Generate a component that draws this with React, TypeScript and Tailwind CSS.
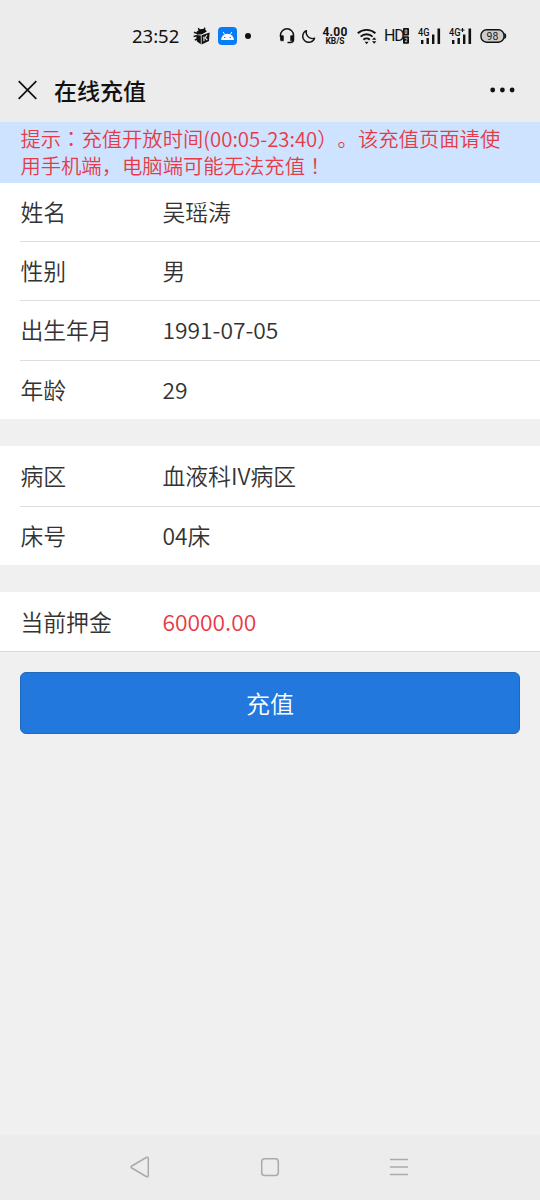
import type { ReactNode } from "react";
import clsx from "clsx";

interface Field {
  label: string;
  value: string;
  height: string;
  danger?: boolean;
}

const personFields: Field[] = [
  { label: "姓名", value: "吴瑶涛", height: "h-[59px]" },
  { label: "性别", value: "男", height: "h-[59px]" },
  { label: "出生年月", value: "1991-07-05", height: "h-[60px]" },
  { label: "年龄", value: "29", height: "h-[58px]" },
];

const wardFields: Field[] = [
  { label: "病区", value: "血液科IV病区", height: "h-[61px]" },
  { label: "床号", value: "04床", height: "h-[58px]" },
];

const depositFields: Field[] = [
  { label: "当前押金", value: "60000.00", height: "h-[59px]", danger: true },
];

function SignalIcon({ label }: { label: string }) {
  return (
    <svg width="24" height="18" viewBox="0 0 24 18" fill="#111">
      <text x="0" y="8.5" fontSize="10" fontWeight="500" fontFamily="Roboto, sans-serif" textLength="11.5" lengthAdjust="spacingAndGlyphs">
        4G
      </text>
      {label === "4G+" && <path d="M11.5 3h4M13.5 1v4" stroke="#111" strokeWidth="1.1" />}
      <rect x="3" y="13" width="2.4" height="4" />
      <rect x="8.5" y="11" width="2.4" height="6" />
      <rect x="14" y="7.5" width="2.4" height="9.5" />
      <rect x="19.5" y="1.5" width="2.6" height="15.5" />
    </svg>
  );
}

function StatusBar() {
  return (
    <div className="flex h-[60px] items-center pt-3 pl-[132px] font-normal text-[#111]">
      <span className="w-[61px] font-['Noto_Sans','Roboto',sans-serif] text-[18.5px] leading-6">23:52</span>
      {/* bug */}
      <svg width="18" height="20" viewBox="0 0 18 20" fill="#111">
        <path d="M5.2 2.2 7 4.6M11.8 1.6 11 4.4M1 6.2l3 1.2M.6 10.4l3-.6M1.8 14l2.6-1" stroke="#111" strokeWidth="1.5" />
        <path d="m3.4 6 3.2-2.8 5.2-.4 2 2.6L9 8.2 4 8.8Z" />
        <path d="m3 9 4.8.6v8.6L4 15.6ZM8.6 9.2l8-2.6-.6 8.4-7.4 3.4Z" />
        <path d="m10.8 10.4.2 4.8M14 9l-1.9 3 2.2 2" stroke="#ececec" strokeWidth="1.1" fill="none" />
      </svg>
      {/* android head */}
      <svg className="ml-[7px]" width="19" height="18" viewBox="0 0 19 18">
        <rect width="19" height="18" rx="4" fill="#087cf5" />
        <path d="M3.2 13a6.3 6.3 0 0 1 12.6 0Z" fill="#fff" />
        <path d="m5.2 5 1.5 2.5M13.8 5l-1.5 2.5" stroke="#fff" strokeWidth="1" />
        <circle cx="6.8" cy="10.5" r=".7" fill="#087cf5" />
        <circle cx="12.2" cy="10.5" r=".7" fill="#087cf5" />
      </svg>
      <span className="ml-[8px] size-[6px] rounded-full bg-[#111]" />
      {/* headset */}
      <svg className="ml-[28px]" width="16" height="16" viewBox="0 0 16 16" fill="none" stroke="#111" strokeWidth="1.5">
        <path d="M1.5 9V7.3a6.4 6.4 0 0 1 13 0v4.2c0 2-1 3-3 3H8.5" />
        <path d="M1.5 7.8h2.8v5H2.5c-.7 0-1-.4-1-1ZM14.5 7.8h-2.8v5h1.8c.7 0 1-.4 1-1Z" fill="#111" strokeWidth=".8" />
      </svg>
      <svg className="ml-[6px]" width="15" height="15" viewBox="0 0 15 15" fill="none" stroke="#111" strokeWidth="1.4" strokeLinejoin="round">
        <path d="M5.4 1.6a6.1 6.1 0 1 0 8.2 7.6C9 10.8 4.4 7 5.4 1.6Z" />
      </svg>
      <div className="ml-[6px] flex w-[26px] flex-col items-center font-['Roboto',sans-serif] font-bold">
        <span className="text-[12px] leading-[10px] tracking-[0.2px]">4.00</span>
        <span className="text-[8.5px] leading-[9px]">KB/S</span>
      </div>
      {/* wifi */}
      <svg className="ml-[9px]" width="21" height="17" viewBox="0 0 21 17" fill="none" stroke="#111" strokeWidth="1.9">
        <path d="M.8 5.2a13.2 13.2 0 0 1 17.6 0M3.6 8.6a9 9 0 0 1 12 0M6.4 11.7a4.8 4.8 0 0 1 6.4 0" />
        <path d="M7.6 13.7h4l-2 2.6Z" fill="#111" stroke="none" />
        <path d="m15 11.7 2.2-2.5 2.2 2.5ZM15 13.2l2.2 2.5 2.2-2.5Z" fill="#111" stroke="none" />
      </svg>
      <span className="ml-[6px] w-[19px] font-['Roboto',sans-serif] text-[16px] leading-5 tracking-[-1.2px]">HD</span>
      <svg width="6" height="16" viewBox="0 0 7 16" preserveAspectRatio="none">
        <rect width="7" height="7.5" rx="1" fill="#111" />
        <rect y="8.2" width="7" height="7.5" rx="1" fill="#111" />
        <path d="M2.5 2h2v3.5h-2ZM2 10.3h2.7v1.5L2.3 13.6H5" stroke="#ececec" strokeWidth=".8" fill="none" />
      </svg>
      <div className="ml-[9px] flex w-[62px] gap-[7px]">
        <SignalIcon label="4G" />
        <SignalIcon label="4G+" />
      </div>
      {/* battery */}
      <svg width="27" height="14" viewBox="0 0 27 14">
        <rect x="1" y=".8" width="23" height="12.4" rx="5.5" fill="#ccc" stroke="#111" strokeWidth="1.4" />
        <path d="M24.8 4.5c1.3.8 1.3 4.2 0 5Z" fill="#111" stroke="#111" />
        <text x="12.5" y="10.9" fontSize="10.5" textAnchor="middle" fontFamily="Roboto, sans-serif" fill="#222">98</text>
      </svg>
    </div>
  );
}

function TitleBar() {
  return (
    <header className="flex h-[60px] items-center pr-[25px] pl-[18px]">
      <svg width="19" height="20" viewBox="0 0 19 20" stroke="#111" strokeWidth="1.7">
        <path d="m.7 1.2 17.6 17.6M18.3 1.2.7 18.8" />
      </svg>
      <h1 className="ml-[17px] flex-1 text-[23px] leading-8 font-medium text-[#111]">在线充值</h1>
      <svg width="25" height="6" viewBox="0 0 25 6" fill="#111">
        <circle cx="2.7" cy="3" r="2.4" />
        <circle cx="12.4" cy="3" r="2.4" />
        <circle cx="22.1" cy="3" r="2.4" />
      </svg>
    </header>
  );
}

// full-width punctuation drawn in the middle of its cell
function Mark({ children }: { children: ReactNode }) {
  return <span className="font-['Noto_Sans_CJK_TC',sans-serif]">{children}</span>;
}

function FieldList({ fields }: { fields: Field[] }) {
  return (
    <dl className="bg-white pl-5">
      {fields.map((field, i) => (
        <div
          key={field.label}
          className={clsx(
            "flex items-center text-[22.85px] leading-8 text-[#333]",
            field.height,
            field.danger ? "pb-px" : "pb-[3px]",
            i < fields.length - 1 && "border-b border-[#dedede]"
          )}
        >
          <dt className="w-[142px] pl-[0.4px]">{field.label}</dt>
          <dd className={clsx("pl-[0.4px]", field.danger && "text-[#e63b46]")}>{field.value}</dd>
        </div>
      ))}
    </dl>
  );
}

function NavBar() {
  return (
    <nav className="flex h-[65px] items-center justify-between bg-[#ececec] pr-[131px] pb-[2px] pl-[130px]">
      <svg width="20" height="22" viewBox="0 0 20 22" fill="none" stroke="#aaa" strokeWidth="1.5" strokeLinejoin="round">
        <path d="M1.8 10 16.2 1.5c1.2-.7 2.1-.2 2.1 1v17c0 1.2-.9 1.7-2.1 1L1.8 12c-1-.6-1-1.4 0-2Z" />
      </svg>
      <svg width="20" height="20" viewBox="0 0 20 20" fill="none" stroke="#aaa" strokeWidth="1.5">
        <rect x="1.7" y="1.7" width="16.6" height="16.8" rx="3" />
      </svg>
      <svg width="20" height="20" viewBox="0 0 20 20" stroke="#aaa" strokeWidth="1.5">
        <path d="M1 2.5h18M1 10h18M1 17.5h18" />
      </svg>
    </nav>
  );
}

export default function App() {
  return (
    <div className="flex h-[1200px] w-[540px] flex-col bg-[#f0f0f0] font-['Noto_Sans_CJK_SC',sans-serif] font-[350] [text-spacing-trim:space-all]">
      <div className="h-[122px] bg-[#ececec]">
        <StatusBar />
        <TitleBar />
      </div>

      <div className="h-[61px] bg-[#cde3ff] pt-[3px] pl-[20.4px] text-[20.33px] leading-[27px] whitespace-nowrap text-[#e63b46]">
        <p>
          提示<Mark>：</Mark>充值开放时间(00:05-23:40）。该充值页面请使
        </p>
        <p>
          用手机端，电脑端可能无法充值<Mark>！</Mark>
        </p>
      </div>

      <main className="flex-1">
        <FieldList fields={personFields} />
        <div className="mt-[27px]">
          <FieldList fields={wardFields} />
        </div>
        <div className="mt-[27px] border-b border-[#d9d9d9]">
          <FieldList fields={depositFields} />
        </div>
        <div className="px-5 pt-5">
          <button className="h-[62px] w-full rounded-md border border-[#2069bd] bg-[#2278dd] text-2xl text-white">
            充值
          </button>
        </div>
      </main>

      <NavBar />
    </div>
  );
}
